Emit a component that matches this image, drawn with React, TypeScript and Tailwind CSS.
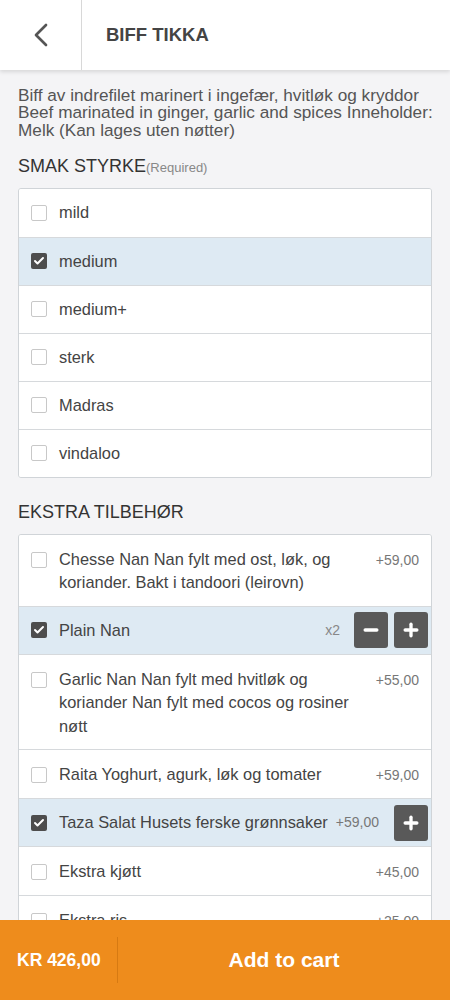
import { Check, ChevronLeft, Minus, Plus } from 'lucide-react';

type Option = {
  label: string;
  checked?: boolean;
  price?: string;
  qty?: number;
  stepper?: 'both' | 'plus';
};

const strengths: Option[] = [
  { label: 'mild' },
  { label: 'medium', checked: true },
  { label: 'medium+' },
  { label: 'sterk' },
  { label: 'Madras' },
  { label: 'vindaloo' },
];

const extras: Option[] = [
  { label: 'Chesse Nan Nan fylt med ost, løk, og koriander. Bakt i tandoori (leirovn)', price: '+59,00' },
  { label: 'Plain Nan', checked: true, qty: 2, stepper: 'both' },
  { label: 'Garlic Nan Nan fylt med hvitløk og koriander Nan fylt med cocos og rosiner nøtt', price: '+55,00' },
  { label: 'Raita Yoghurt, agurk, løk og tomater', price: '+59,00' },
  { label: 'Taza Salat Husets ferske grønnsaker', checked: true, price: '+59,00', stepper: 'plus' },
  { label: 'Ekstra kjøtt', price: '+45,00' },
  { label: 'Ekstra ris', price: '+25,00' },
];

function Checkbox({ checked }: { checked?: boolean }) {
  if (checked) {
    return (
      <span className="flex h-4 w-4 shrink-0 items-center justify-center rounded-[2px] bg-[#4d4d4d]">
        <Check className="h-3 w-3 text-white" strokeWidth={4} />
      </span>
    );
  }
  return <span className="h-4 w-4 shrink-0 rounded-[2px] border border-[#c8c8c8] bg-white" />;
}

function StepButton({ kind }: { kind: 'minus' | 'plus' }) {
  return (
    <button className="flex h-9 w-[34px] items-center justify-center rounded-[3px] bg-[#595959]">
      {kind === 'minus' ? (
        <Minus className="h-5 w-5 text-white" strokeWidth={4} />
      ) : (
        <Plus className="h-5 w-5 text-white" strokeWidth={4} />
      )}
    </button>
  );
}

function Row({ item }: { item: Option }) {
  const oneLine = !item.price || item.stepper;
  return (
    <div
      className={`flex border-t border-[#d6d9dc] first:border-t-0 ${
        item.checked ? 'bg-[#deeaf3]' : 'bg-white'
      } ${oneLine ? 'h-12 items-center' : 'items-start pt-[13px] pb-[11px]'} pl-[12px] pr-[3px]`}
    >
      <div className={`${oneLine ? '' : 'pt-1'} flex`}>
        <Checkbox checked={item.checked} />
      </div>
      <span className="ml-[12px] flex-1 text-[16.4px] leading-[23.5px] text-[#444]">{item.label}</span>
      {item.stepper === 'both' && (
        <div className="flex items-center">
          <span className="mr-[14px] text-[14px] text-[#888]">x{item.qty}</span>
          <div className="flex gap-[6px]">
            <StepButton kind="minus" />
            <StepButton kind="plus" />
          </div>
        </div>
      )}
      {item.stepper === 'plus' && (
        <div className="flex items-center">
          <span className="mr-[15px] text-[14px] text-[#777]">{item.price}</span>
          <StepButton kind="plus" />
        </div>
      )}
      {!item.stepper && item.price && (
        <span className="ml-3 pr-[9px] text-[14px] leading-6 text-[#777]">{item.price}</span>
      )}
    </div>
  );
}

export default function App() {
  return (
    <div
      className="relative h-[1000px] w-[450px] overflow-hidden bg-[#f4f4f6]"
      style={{ fontFamily: '"Liberation Sans", Arial, sans-serif' }}
    >
      <header className="relative z-10 flex h-[70px] bg-white shadow-[0_2px_4px_rgba(0,0,0,0.12)]">
        <div className="flex w-[82px] items-center justify-center border-r border-[#d8d8d8]">
          <ChevronLeft className="h-10 w-10 text-[#555]" strokeWidth={1.6} />
        </div>
        <h1 className="flex items-center pl-[24px] text-[18.5px] font-bold text-[#444]">BIFF TIKKA</h1>
      </header>

      <div className="px-[18px] pb-[100px]">
        <p className="-mr-[18px] mt-[17px] text-[17.2px] leading-[17.3px] text-[#555]">
          <span className="block whitespace-nowrap">Biff av indrefilet marinert i ingefær, hvitløk og kryddor</span>
          <span className="block whitespace-nowrap">Beef marinated in ginger, garlic and spices Inneholder:</span>
          <span className="block whitespace-nowrap">Melk (Kan lages uten nøtter)</span>
        </p>

        <h2 className="mt-[15px] text-[18px] leading-6 text-[#333]">
          SMAK STYRKE<span className="text-[13px] text-[#888]">(Required)</span>
        </h2>
        <div className="mt-[8px] overflow-hidden rounded-[3px] border border-[#d0d4d8]">
          {strengths.map((s) => (
            <Row key={s.label} item={s} />
          ))}
        </div>

        <h2 className="mt-[22px] text-[18px] leading-6 text-[#333]">EKSTRA TILBEHØR</h2>
        <div className="mt-[10px] overflow-hidden rounded-[3px] border border-[#d0d4d8]">
          {extras.map((s) => (
            <Row key={s.label} item={s} />
          ))}
        </div>
      </div>

      <footer className="absolute bottom-0 left-0 flex h-[80px] w-full items-center bg-[#ee8c1c] text-white">
        <div className="flex h-full w-[118px] items-center py-[17px] pl-[17px]">
          <span className="flex-1 text-[17.5px] font-bold">KR 426,00</span>
          <span className="h-full w-px bg-[#d67a12]" />
        </div>
        <div className="flex flex-1 items-center justify-center text-[21px] font-bold">Add to cart</div>
      </footer>
    </div>
  );
}
